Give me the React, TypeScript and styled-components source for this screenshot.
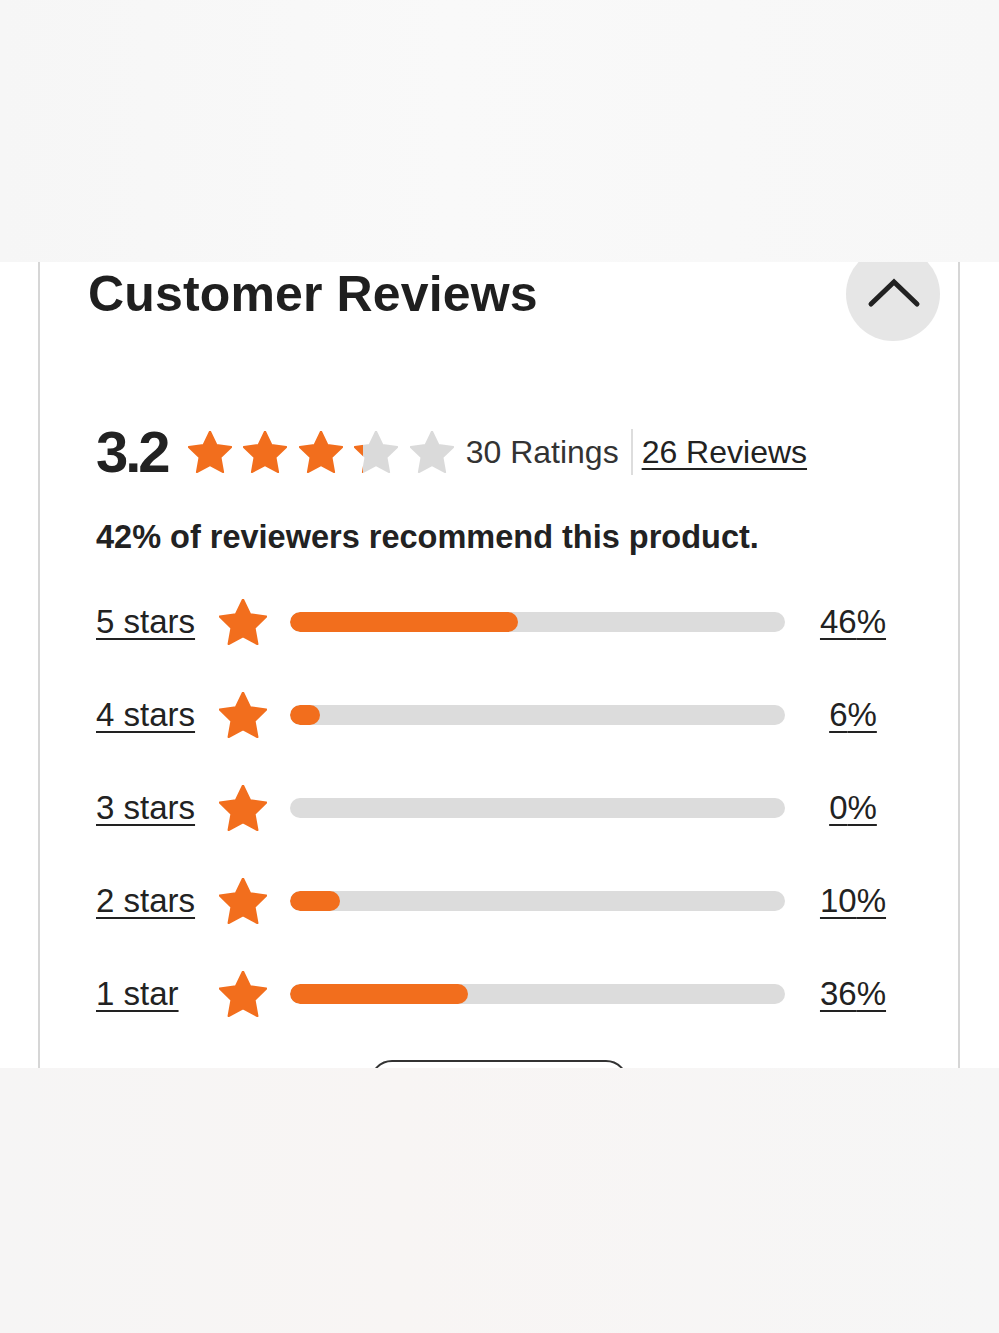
import React from 'react';
import styled, { createGlobalStyle } from 'styled-components';

const ORANGE = '#f26e1d';
const STAR_GRAY = '#dadada';

const GlobalStyle = createGlobalStyle`
  html, body { margin: 0; padding: 0; background: #fff; }
  body { font-family: "Liberation Sans", Arial, sans-serif; color: #333; }
`;

const Page = styled.div`
  width: 999px;
  height: 1333px;
  display: flex;
  flex-direction: column;
`;

const TopBand = styled.div`
  height: 262px;
  flex: none;
  background: linear-gradient(90deg, #f6f6f6 0%, #f9f9f9 45%, #f7f7f7 100%);
`;

const BottomBand = styled.div`
  flex: 1;
  background: linear-gradient(90deg, #f6f5f5 0%, #f8f5f4 40%, #f6f6f6 100%);
`;

const Card = styled.section`
  height: 806px;
  flex: none;
  margin: 0 39px 0 38px;
  border-left: 2px solid #d6d6d6;
  border-right: 2px solid #d6d6d6;
  background: #fff;
  overflow: hidden;
  display: flex;
  flex-direction: column;
`;

const Header = styled.header`
  margin-top: -15px;
  height: 94px;
  flex: none;
  padding: 0 18px 0 48px;
  display: flex;
  justify-content: space-between;
  align-items: center;
`;

const Title = styled.h2`
  margin: 0;
  font: 700 50px/1 "Liberation Sans", Arial, sans-serif;
  color: #1f1f1f;
  letter-spacing: 0.15px;
`;

const CollapseButton = styled.button`
  width: 94px;
  height: 94px;
  border-radius: 50%;
  border: none;
  padding: 0;
  background: #e6e6e6;
  display: grid;
  place-items: center;
`;

const RatingRow = styled.div`
  margin-top: 82px;
  height: 60px;
  padding-left: 56px;
  display: flex;
  align-items: center;
`;

const Score = styled.span`
  font: 700 58px/1 "Liberation Sans", Arial, sans-serif;
  letter-spacing: -3px;
  color: #222;
  margin-right: 20px;
`;

const Stars = styled.div`
  display: flex;
  gap: 11.5px;
`;

const CountText = styled.span`
  margin-left: 12px;
  font-size: 32px;
  color: #333;
`;

const Divider = styled.span`
  width: 2px;
  height: 46px;
  background: #dddddd;
  margin: 0 9px 0 12px;
`;

const UnderlinedLink = styled.a<{ $size?: number }>`
  font-size: ${(p) => p.$size ?? 32}px;
  color: #222;
  text-decoration: underline;
  text-decoration-thickness: 2px;
  text-underline-offset: 5px;
  cursor: pointer;
`;

const Recommend = styled.p`
  margin: 36px 0 0;
  padding-left: 56px;
  font: 700 32.5px/40px "Liberation Sans", Arial, sans-serif;
  color: #222;
`;

const Distribution = styled.div`
  margin-top: 18.5px;
  padding-left: 56px;
  display: flex;
  flex-direction: column;
`;

const DistRow = styled.div`
  height: 93px;
  display: flex;
  align-items: center;
`;

const LabelCell = styled.div`
  width: 123px;
`;

const Bar = styled.div`
  margin-left: 23px;
  width: 495px;
  height: 20px;
  border-radius: 10px;
  background: #dcdcdc;
  overflow: hidden;
`;

const BarFill = styled.div`
  height: 100%;
  border-radius: 10px;
  background: ${ORANGE};
`;

const PctCell = styled.div`
  width: 136px;
  text-align: center;
`;

const WriteButton = styled.button`
  margin: 19px auto 0;
  width: 258px;
  height: 56px;
  flex: none;
  border: 2.5px solid #333;
  border-radius: 22px;
  background: #fff;
`;

const STAR_POINTS =
  '12,2.2 14.95,8.4 21.7,9.3 16.8,14.05 18.0,20.8 12,17.6 6.0,20.8 7.2,14.05 2.3,9.3 9.05,8.4';

const Star: React.FC<{ fill: number; w: number; h: number; id: string }> = ({ fill, w, h, id }) => (
  <svg width={w} height={h} viewBox="2 2 20 19.2" aria-hidden="true">
    <defs>
      <linearGradient id={id} x1="2" x2="22" y1="0" y2="0" gradientUnits="userSpaceOnUse">
        <stop offset={`${fill * 100}%`} stopColor={ORANGE} />
        <stop offset={`${fill * 100}%`} stopColor={STAR_GRAY} />
      </linearGradient>
    </defs>
    <polygon
      points={STAR_POINTS}
      fill={`url(#${id})`}
      stroke={`url(#${id})`}
      strokeWidth={0.9}
      strokeLinejoin="round"
    />
  </svg>
);

const Chevron = () => (
  <svg width="94" height="94" viewBox="0 0 94 94" aria-hidden="true">
    <polyline
      points="25,57 48,35 71,57"
      fill="none"
      stroke="#222"
      strokeWidth="5"
      strokeLinecap="round"
      strokeLinejoin="miter"
    />
  </svg>
);

const distribution = [
  { label: '5 stars', pct: 46 },
  { label: '4 stars', pct: 6 },
  { label: '3 stars', pct: 0 },
  { label: '2 stars', pct: 10 },
  { label: '1 star', pct: 36 },
];

const rating = 3.2;

export default function App() {
  return (
    <Page>
      <GlobalStyle />
      <TopBand />
      <Card>
        <Header>
          <Title>Customer Reviews</Title>
          <CollapseButton aria-label="Collapse customer reviews">
            <Chevron />
          </CollapseButton>
        </Header>

        <RatingRow>
          <Score>3.2</Score>
          <Stars>
            {[0, 1, 2, 3, 4].map((i) => (
              <Star
                key={i}
                id={`rs${i}`}
                w={44}
                h={42}
                fill={Math.max(0, Math.min(1, rating - i))}
              />
            ))}
          </Stars>
          <CountText>30 Ratings</CountText>
          <Divider />
          <UnderlinedLink>26 Reviews</UnderlinedLink>
        </RatingRow>

        <Recommend>42% of reviewers recommend this product.</Recommend>

        <Distribution>
          {distribution.map((d, i) => (
            <DistRow key={d.label}>
              <LabelCell>
                <UnderlinedLink $size={33}>{d.label}</UnderlinedLink>
              </LabelCell>
              <Star id={`ds${i}`} w={48} h={46} fill={1} />
              <Bar>
                <BarFill style={{ width: d.pct === 0 ? 0 : `${Math.max(d.pct, 6)}%` }} />
              </Bar>
              <PctCell>
                <UnderlinedLink $size={33}>{d.pct}%</UnderlinedLink>
              </PctCell>
            </DistRow>
          ))}
        </Distribution>

        <WriteButton aria-label="Write a Review" />
      </Card>
      <BottomBand />
    </Page>
  );
}
